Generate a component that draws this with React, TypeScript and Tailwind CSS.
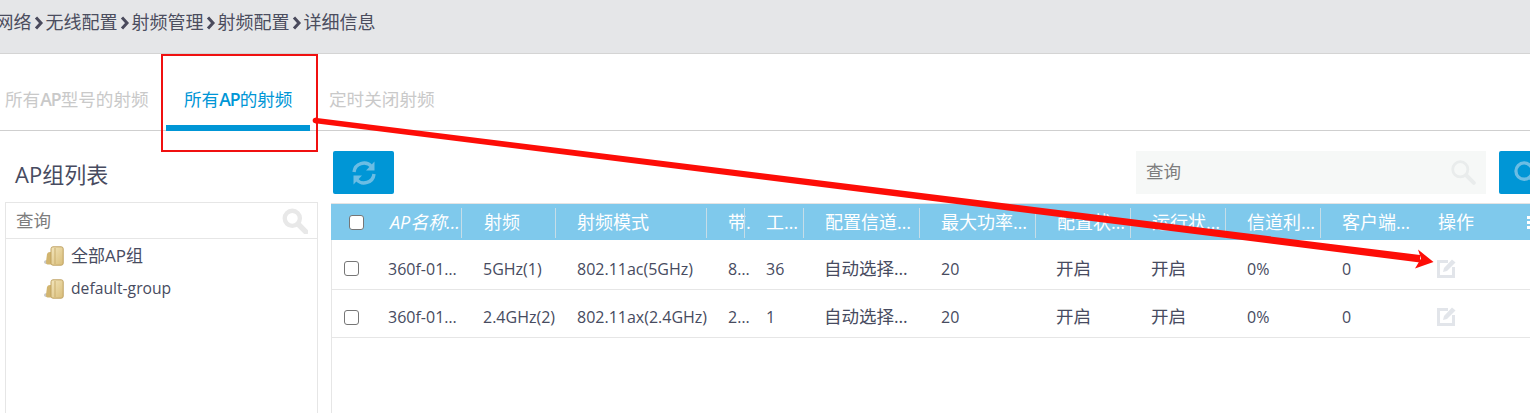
import React from "react";

const font = { fontFamily: '"Open Sans","Noto Sans CJK SC",sans-serif' };
const grid = "grid grid-cols-[35px_95px_94px_151px_38px_59px_116px_116px_95px_95px_95px_96px_111px_1fr]";

function Chevron() {
  return (
    <svg width="10" height="14" viewBox="0 0 10 14" className="mx-[2px] shrink-0">
      <path d="M2 1.5 L7 7 L2 12.5" fill="none" stroke="#4a4a5c" strokeWidth="3" />
    </svg>
  );
}

function SearchIcon({ size, color, stroke }: { size: number; color: string; stroke: number }) {
  return (
    <svg width={size} height={size} viewBox="0 0 24 24">
      <circle cx="9.5" cy="9.5" r="7" fill="none" stroke={color} strokeWidth={stroke} />
      <path d="M15 15 L22 22" stroke={color} strokeWidth={stroke + 1} strokeLinecap="round" />
    </svg>
  );
}

function Refresh() {
  return (
    <svg width="26" height="26" viewBox="0 0 26 26" fill="none">
      <path d="M3 12 A10 10 0 0 1 20.5 6.5" stroke="#6bbde4" strokeWidth="3.4" />
      <path d="M23 14 A10 10 0 0 1 5.5 19.5" stroke="#6bbde4" strokeWidth="3.4" />
      <path d="M23.5 1.5 V10.5 H15 Z" fill="#6bbde4" />
      <path d="M2.5 24.5 V15.5 H11 Z" fill="#6bbde4" />
    </svg>
  );
}

function Folder({ id }: { id: string }) {
  return (
    <svg width="20" height="20" viewBox="0 0 20 20" className="shrink-0">
      <defs>
        <linearGradient id={id} x1="0" y1="0" x2="1" y2="1">
          <stop offset="0" stopColor="#f3e6bd" />
          <stop offset="1" stopColor="#d9bd78" />
        </linearGradient>
      </defs>
      <ellipse cx="3.5" cy="16" rx="3.5" ry="2" fill="#c9c9c9" />
      <path d="M2 16 L3 8 Q3.5 6 6 6 L8 6 L8 18.5 L3.5 18.5 Q2 18.5 2 16Z" fill="#d2b56f" />
      <rect x="7" y="0.8" width="12.2" height="18.4" rx="2" fill={`url(#${id})`} stroke="#bfa263" strokeWidth="1" />
      <path d="M11 2 V18" stroke="#c9ad6c" strokeWidth="1" />
    </svg>
  );
}

function EditIcon() {
  return (
    <svg width="19" height="20" viewBox="0 0 19 20" fill="none" className="block">
      <path d="M11 3.5 H1.5 V18.5 H16.5 V9" stroke="#e2e5ea" strokeWidth="3" />
      <path d="M6 14 L7 10 L15 1.5 L18.5 4.5 L10 13Z" fill="#e2e5ea" />
    </svg>
  );
}

const Check = () => (
  <span className="block h-[15px] w-[15px] rounded-[3px] border border-[#767676] bg-white" />
);

const Ap = () => <span className="font-semibold tracking-[-1px]">AP</span>;

const headers = ["AP名称…", "射频", "射频模式", "带.", "工…", "配置信道…", "最大功率…", "配置状…", "运行状…", "信道利…", "客户端…", "操作"];
const rows = [
  ["360f-01…", "5GHz(1)", "802.11ac(5GHz)", "8…", "36", "自动选择…", "20", "开启", "开启", "0%", "0"],
  ["360f-01…", "2.4GHz(2)", "802.11ax(2.4GHz)", "2…", "1", "自动选择…", "20", "开启", "开启", "0%", "0"],
];

function Row({ cells, tall }: { cells: string[]; tall: boolean }) {
  return (
    <div className={`${grid} ${tall ? "h-[50px]" : "h-[48px]"} items-center border-b border-l border-[#e6e6e6] pt-[8px] text-[#474b60]`}>
      <div className="pl-[12px]">
        <Check />
      </div>
      {cells.map((c, i) => (
        <div
          key={i}
          className={`whitespace-nowrap ${tall ? "" : "pb-[2px]"} ${/[\u4e00-\u9fff]/.test(c) ? "pl-[20px] text-[17.5px]" : "pl-[21px] text-[16px]"}`}
        >
          {c}
        </div>
      ))}
      <div className={`pl-[20px] ${tall ? "pb-[2px]" : "pb-[4px]"}`}>
        <EditIcon />
      </div>
      <div />
    </div>
  );
}

export default function App() {
  return (
    <div style={font} className="relative h-[413px] w-[1530px] overflow-hidden bg-white text-[#474b60]">
      <div className="flex h-[54px] items-center border-b border-[#d4d4d4] bg-[#e5e6e8] pb-[8px] text-[18px] text-[#4b4d5e]">
        <div className="-ml-[4.5px] flex items-center whitespace-nowrap">
          <span>网络</span>
          <Chevron />
          <span>无线配置</span>
          <Chevron />
          <span>射频管理</span>
          <Chevron />
          <span>射频配置</span>
          <Chevron />
          <span>详细信息</span>
        </div>
      </div>

      <div className="flex h-[77px] border-b border-[#cfcfcf] text-[17.6px]">
        <div className="w-[166px] pl-[5px] pt-[32px] text-[#c9c9c9]">所有<Ap />型号的射频</div>
        <div className="h-[77px] w-[144px] border-b-[6px] border-[#0096d6] pl-[18px] pt-[32px] text-[#0096d6]">所有<Ap />的射频</div>
        <div className="pl-[19px] pt-[32px] text-[#c9c9c9]">定时关闭射频</div>
      </div>

      <div className="flex">
        <div className="ml-[5px] w-[313px] shrink-0">
          <div className="h-[71px] pl-[10px] pt-[28px] text-[22px] leading-[30px] text-[#474b60]">AP组列表</div>
          <div className="h-[300px] border border-[#e6e6e6]">
            <div className="flex h-[36px] items-center justify-between border-b border-[#e6e6e6] pl-[10px] pr-[9px] text-[17.5px] text-[#7d7d7d]">
              <span>查询</span>
              <SearchIcon size={26} color="#e8e8e8" stroke={4} />
            </div>
            <div className="flex h-[32px] items-center gap-[7px] pl-[38px] pt-[2px] text-[17px]">
              <Folder id="f1" />
              <span>全部AP组</span>
            </div>
            <div className="flex h-[32px] items-center gap-[7px] pl-[38px] pt-[3px] text-[15.7px]">
              <Folder id="f2" />
              <span>default-group</span>
            </div>
          </div>
        </div>

        <div className="ml-[13px] min-w-0 flex-1">
          <div className="flex h-[72px] items-start pt-[20px]">
            <button className="ml-[2px] flex h-[43px] w-[61px] items-center justify-center rounded-[2px] bg-[#0096d6]">
              <Refresh />
            </button>
            <div className="ml-auto flex h-[43px] w-[350px] items-center justify-between bg-[#f6f8f7] pb-[2px] pl-[10px] pr-[10px] text-[17.5px] text-[#7d7d7d]">
              <span>查询</span>
              <SearchIcon size={26} color="#e9ecec" stroke={2.6} />
            </div>
            <button className="ml-[13px] flex h-[43px] w-[31px] items-start overflow-hidden rounded-l-[2px] bg-[#0096d6] pl-[14px] pt-[9px]">
              <span className="shrink-0">
                <SearchIcon size={28} color="#6bbde4" stroke={2.8} />
              </span>
            </button>
          </div>
          <div>
            <div className={`${grid} h-[37px] items-center border-t border-[#e4e4e4] bg-[#7fc9ec] text-[18px] text-white`}>
              <div className="pl-[18px] pt-[1px]">
                <Check />
              </div>
              {headers.map((h, i) => (
                <div
                  key={h}
                  className={`relative whitespace-nowrap leading-[27px] ${i === 0 ? "pl-[24px] italic" : i === 1 ? "pl-[23px]" : "pl-[22px]"}`}
                >
                  {h}
                  {i < 10 && <span className="absolute -right-[1px] -top-[1px] h-[30px] w-px bg-[#c5dde8]" />}
                </div>
              ))}
              <div className="flex flex-col gap-[2px]">
                <span className="block h-[3px] w-[4px] bg-white" />
                <span className="block h-[3px] w-[4px] bg-white" />
                <span className="block h-[3px] w-[4px] bg-white" />
              </div>
            </div>
            <Row cells={rows[0]} tall />
            <Row cells={rows[1]} tall={false} />
            <div className="h-[80px] border-l border-[#e6e6e6]" />
          </div>
        </div>
      </div>

      <div className="absolute left-[161px] top-[54px] h-[98px] w-[157px] border-2 border-[#f01010]" />
      <svg className="pointer-events-none absolute left-0 top-0" width="1530" height="413" viewBox="0 0 1530 413">
        <circle cx="315.5" cy="120.5" r="2.8" fill="#fd0d07" />
        <path d="M315 117.8 L1420 255 L1420 262.5 L315 123.2 Z" fill="#fd0d07" />
        <path d="M1433.5 262 L1418 249.5 L1421 258.5 L1415 268.5 Z" fill="#fd0d07" />
      </svg>
    </div>
  );
}
